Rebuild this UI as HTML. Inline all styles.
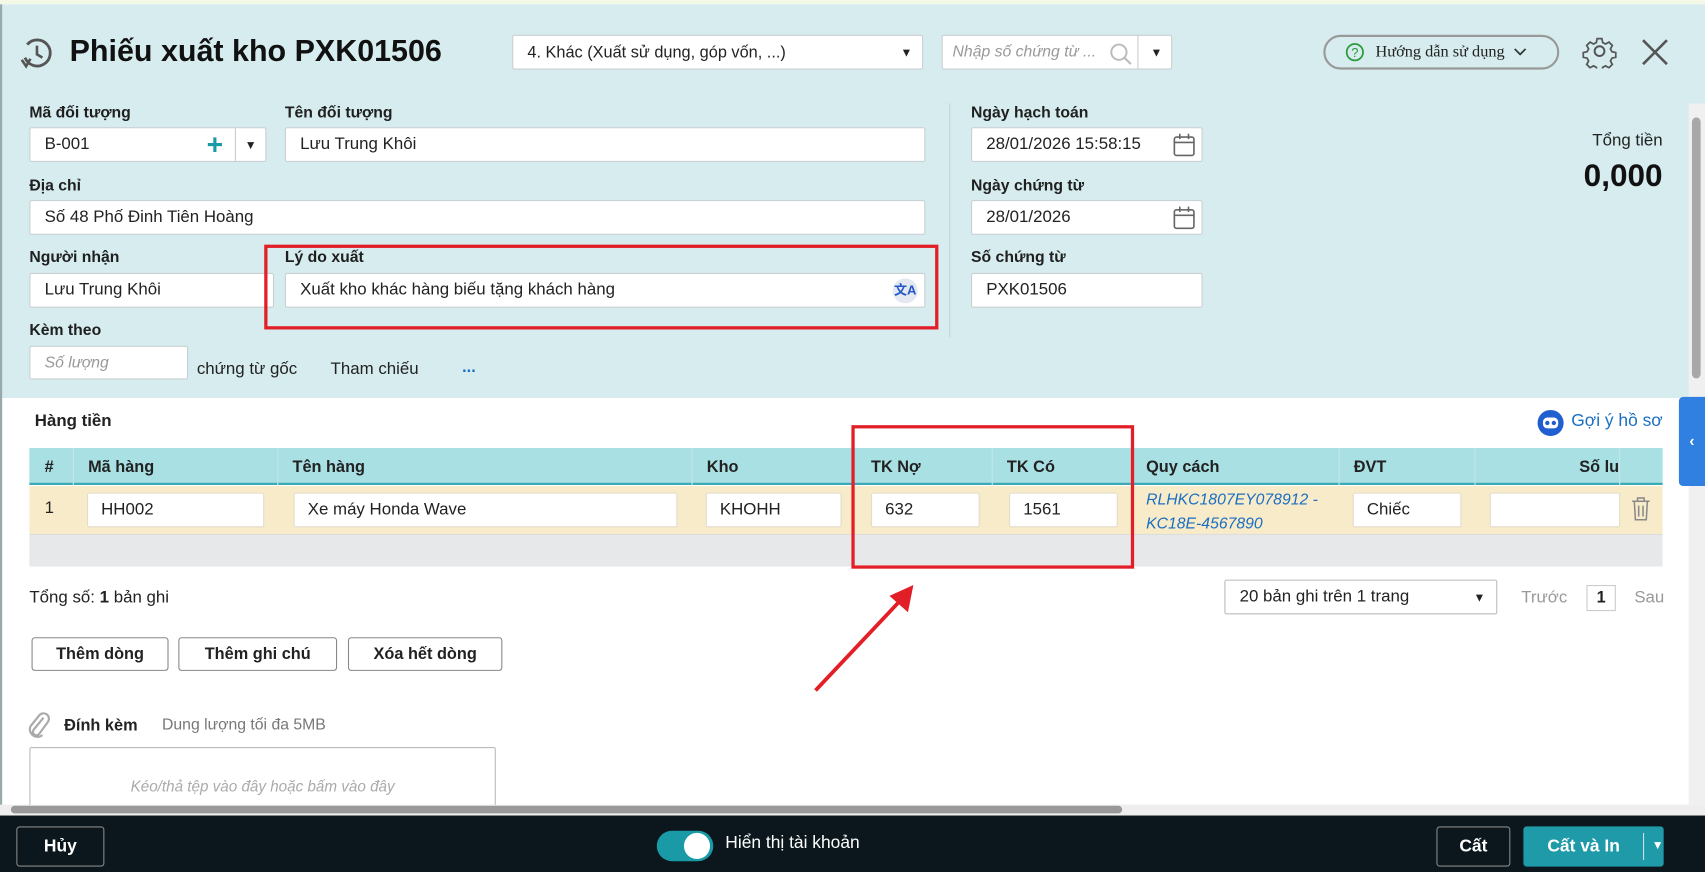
<!DOCTYPE html>
<html><head><meta charset="utf-8">
<style>
*{box-sizing:border-box;margin:0;padding:0}
html,body{width:1705px;height:872px;overflow:hidden;background:#fff}
body{font-family:"Liberation Sans","Noto Sans CJK SC",sans-serif;color:#222;font-size:15px}
#w{position:absolute;left:0;top:0;width:1568px;height:802px;transform:scale(1.08737);transform-origin:0 0;overflow:hidden;background:#fff}
.a{position:absolute}
.lbl{position:absolute;font-weight:bold;font-size:14.5px;color:#1f1f1f}
.in{position:absolute;background:#fff;border:1px solid #c9cfd2;border-radius:2px;font-size:15.5px;padding-left:13px;display:flex;align-items:center;color:#222}
.th{position:absolute;top:412px;height:34px;display:flex;align-items:center;font-weight:bold;font-size:15px;padding-left:13px;border-right:1px solid #c4e6e8}
.ti{position:absolute;top:453px;height:32px;background:#fff;border:1px solid #e2dcc8;border-radius:2px;font-size:15.5px;padding-left:12px;display:flex;align-items:center}
.btn{position:absolute;top:586px;height:31px;border:1px solid #888;border-radius:3px;background:#fff;font-weight:bold;font-size:15px;display:flex;align-items:center;justify-content:center}
.arr{position:absolute;top:10px;font-size:11px}
</style></head><body><div id="w">
<div class="a" style="left:0;top:0;width:1568px;height:4px;background:#f4f8e6"></div>
<div class="a" style="left:0;top:4px;width:1568px;height:362px;background:#d6ecee"></div>
<div class="a" style="left:0;top:4px;width:2px;height:746px;background:#9aa"></div>

<svg class="a" style="left:19px;top:33px" width="30" height="32" viewBox="0 0 30 32"><path d="M6 8 A12 12 0 1 1 4 20" fill="none" stroke="#555" stroke-width="2.6"/><path d="M15 9 V17 L20 20" fill="none" stroke="#555" stroke-width="2.4"/><path d="M1 22 L5 28 L9 21" fill="none" stroke="#555" stroke-width="2.4"/></svg>
<div class="a" style="left:64px;top:31px;font-size:28px;font-weight:bold;color:#111">Phiếu xuất kho PXK01506</div>

<div class="in" style="left:471px;top:32px;width:378px;height:32px;font-size:15px">4. Khác (Xuất sử dụng, góp vốn, ...)<span class="arr" style="right:9px">▼</span></div>
<div class="in" style="left:866px;top:32px;width:212px;height:32px;font-size:14.5px;color:#999;font-style:italic;padding-left:9px">Nhập số chứng từ ...
<svg class="a" style="left:153px;top:6px" width="22" height="22"><circle cx="9" cy="9" r="7" fill="none" stroke="#bbb" stroke-width="1.8"/><path d="M14 14 L20 20" stroke="#bbb" stroke-width="2"/></svg>
<div class="a" style="left:179px;top:0;width:1px;height:30px;background:#ccc"></div><span class="arr" style="right:8px;color:#222;font-style:normal">▼</span></div>

<div class="a" style="left:1217px;top:32px;width:217px;height:32px;border:2px solid #999;border-radius:16px;display:flex;align-items:center;padding-left:18px;font-family:'Liberation Serif',serif;font-size:15px;color:#222"><svg width="18" height="18" style="margin-right:10px"><circle cx="9" cy="9" r="7.5" fill="none" stroke="#2a9a3a" stroke-width="1.6"/><text x="9" y="13.5" text-anchor="middle" font-size="12" fill="#2a9a3a" font-family="Liberation Sans">?</text></svg>Hướng dẫn sử dụng<svg width="14" height="10" style="margin-left:7px"><path d="M2 2 L7 7 L12 2" fill="none" stroke="#333" stroke-width="1.6"/></svg></div>
<svg class="a" style="left:1455px;top:31px" width="32" height="32" viewBox="0 0 32 32"><path d="M13.5 3h5l.8 4 3 1.6 3.6-2 3.5 3.5-2 3.6 1.6 3h0l4 .8v5l-4 .8-1.6 3 2 3.6-3.5 3.5-3.6-2-3 1.6-.8 4h-5l-.8-4-3-1.6-3.6 2-3.5-3.5 2-3.6-1.6-3-4-.8v-5l4-.8 1.6-3-2-3.6 3.5-3.5 3.6 2 3-1.6z" fill="none" stroke="#555" stroke-width="1.8" transform="translate(16 16) scale(.88) translate(-16 -16)"/><circle cx="16" cy="16" r="4.5" fill="none" stroke="#555" stroke-width="1.8"/></svg>
<svg class="a" style="left:1509px;top:35px" width="26" height="26"><path d="M2 2 L24 24 M24 2 L2 24" stroke="#555" stroke-width="2.4"/></svg>

<div class="lbl" style="left:27px;top:96px">Mã đối tượng</div>
<div class="in" style="left:27px;top:117px;width:218px;height:32px">B-001
<span class="a" style="left:162px;top:0px;font-size:26px;color:#1a9aa6;line-height:30px;font-weight:bold">+</span>
<div class="a" style="left:188px;top:0;width:1px;height:30px;background:#ccc"></div><span class="arr" style="right:8px">▼</span></div>
<div class="lbl" style="left:262px;top:96px">Tên đối tượng</div>
<div class="in" style="left:262px;top:117px;width:589px;height:32px">Lưu Trung Khôi</div>
<div class="lbl" style="left:27px;top:163px">Địa chỉ</div>
<div class="in" style="left:27px;top:184px;width:824px;height:32px">Số 48 Phố Đinh Tiên Hoàng</div>
<div class="lbl" style="left:27px;top:229px">Người nhận</div>
<div class="in" style="left:27px;top:251px;width:225px;height:32px">Lưu Trung Khôi</div>
<div class="lbl" style="left:262px;top:229px">Lý do xuất</div>
<div class="in" style="left:262px;top:251px;width:589px;height:32px">Xuất kho khác hàng biếu tặng khách hàng
<div class="a" style="right:6px;top:4px;width:23px;height:23px;border-radius:50%;background:#e4e8f0;color:#2456c8;font-weight:bold;font-size:12px;text-align:center;line-height:23px">文A</div></div>
<div class="a" style="left:243px;top:225px;width:620px;height:78px;border:3px solid #e21f26"></div>
<div class="lbl" style="left:27px;top:296px">Kèm theo</div>
<div class="in" style="left:27px;top:318px;width:146px;height:31px;color:#999;font-style:italic;font-size:14.5px">Số lượng</div>
<div class="a" style="left:181px;top:331px;font-size:15.5px">chứng từ gốc</div>
<div class="a" style="left:304px;top:331px;font-size:15.5px">Tham chiếu</div>
<div class="a" style="left:425px;top:329px;font-size:15px;color:#1a6fc4;font-weight:bold">...</div>

<div class="a" style="left:873px;top:95px;width:1px;height:215px;background:#c0d4d6"></div>
<div class="lbl" style="left:893px;top:96px">Ngày hạch toán</div>
<div class="in" style="left:893px;top:117px;width:213px;height:32px">28/01/2026 15:58:15</div>
<div class="lbl" style="left:893px;top:163px">Ngày chứng từ</div>
<div class="in" style="left:893px;top:184px;width:213px;height:32px">28/01/2026</div>
<svg class="a" style="left:1078px;top:121px" width="22" height="24"><rect x="2" y="5" width="18" height="17" rx="2" fill="none" stroke="#666" stroke-width="1.5"/><path d="M2 10H20M7 2V7M15 2V7" stroke="#666" stroke-width="1.5"/></svg>
<svg class="a" style="left:1078px;top:188px" width="22" height="24"><rect x="2" y="5" width="18" height="17" rx="2" fill="none" stroke="#666" stroke-width="1.5"/><path d="M2 10H20M7 2V7M15 2V7" stroke="#666" stroke-width="1.5"/></svg>
<div class="lbl" style="left:893px;top:229px">Số chứng từ</div>
<div class="in" style="left:893px;top:251px;width:213px;height:32px">PXK01506</div>
<div class="a" style="right:39px;top:121px;font-size:15.5px">Tổng tiền</div>
<div class="a" style="right:39px;top:146px;font-size:29px;font-weight:bold;color:#111">0,000</div>

<div class="a" style="left:1553px;top:95px;width:15px;height:645px;background:#f0f0f0"></div>
<div class="a" style="left:1556px;top:108px;width:8px;height:240px;background:#a8a8a8;border-radius:4px"></div>
<div class="a" style="left:1544px;top:365px;width:24px;height:82px;background:#2f80e0;border-radius:4px 0 0 4px;color:#fff;font-weight:bold;text-align:center;line-height:80px;font-size:14px">‹</div>

<div class="a" style="left:32px;top:379px;font-weight:bold;font-size:15.5px">Hàng tiền</div>
<svg class="a" style="left:1413px;top:376px" width="26" height="26"><circle cx="13" cy="13" r="12" fill="#1f5fd0"/><rect x="6" y="8" width="14" height="10" rx="4" fill="#fff"/><circle cx="10" cy="13" r="2" fill="#1f5fd0"/><circle cx="16" cy="13" r="2" fill="#1f5fd0"/></svg>
<div class="a" style="left:1445px;top:379px;font-size:16px;color:#1a6fc4">Gợi ý hồ sơ</div>

<div class="a" style="left:27px;top:412px;width:1502px;height:34px;background:#a9e0e4;border-bottom:2px solid #3aa9b3"></div>
<div class="th" style="left:27px;width:41px;padding-left:14px">#</div>
<div class="th" style="left:68px;width:188px">Mã hàng</div>
<div class="th" style="left:256px;width:381px">Tên hàng</div>
<div class="th" style="left:637px;width:148px">Kho</div>
<div class="th" style="left:785px;width:128px;padding-left:16px">TK Nợ</div>
<div class="th" style="left:913px;width:128px">TK Có</div>
<div class="th" style="left:1041px;width:191px">Quy cách</div>
<div class="th" style="left:1232px;width:125px">ĐVT</div>
<div class="th" style="left:1357px;width:133px;justify-content:flex-end;padding-right:0">Số lu</div>
<div class="a" style="left:27px;top:447px;width:1502px;height:45px;background:#f8ebc9;border-bottom:1px solid #ddd"></div>
<div class="a" style="left:41px;top:459px;font-size:15.5px">1</div>
<div class="ti" style="left:80px;width:163px">HH002</div>
<div class="ti" style="left:270px;width:353px">Xe máy Honda Wave</div>
<div class="ti" style="left:649px;width:125px">KHOHH</div>
<div class="ti" style="left:801px;width:100px">632</div>
<div class="ti" style="left:928px;width:100px">1561</div>
<div class="a" style="left:1054px;top:449px;font-size:14.5px;font-style:italic;color:#1a6fc4;line-height:22px">RLHKC1807EY078912 -<br>KC18E-4567890</div>
<div class="ti" style="left:1244px;width:100px">Chiếc</div>
<div class="ti" style="left:1370px;width:120px"></div>
<svg class="a" style="left:1499px;top:456px" width="20" height="24"><path d="M2 5H18M7 5V2H13V5M4 5L5 22H15L16 5M8 9V19M12 9V19" fill="none" stroke="#888" stroke-width="1.4"/></svg>
<div class="a" style="left:27px;top:492px;width:1502px;height:29px;background:#e7e8ea"></div>
<div class="a" style="left:783px;top:391px;width:260px;height:132px;border:3px solid #e21f26"></div>
<svg class="a" style="left:740px;top:530px" width="110" height="115"><path d="M10 105 L92 18" stroke="#e21f26" stroke-width="3.5"/><path d="M100 8 L78 18 L95 33 Z" fill="#e21f26"/></svg>

<div class="a" style="left:27px;top:541px;font-size:15.5px">Tổng số: <b>1</b> bản ghi</div>
<div class="in" style="left:1126px;top:533px;width:251px;height:32px;font-size:15.5px;border-color:#bbb">20 bản ghi trên 1 trang<span class="arr" style="right:10px">▼</span></div>
<div class="a" style="left:1399px;top:541px;color:#999;font-size:15.5px">Trước</div>
<div class="a" style="left:1459px;top:538px;width:27px;height:24px;border:1px solid #ccc;font-weight:bold;text-align:center;line-height:22px">1</div>
<div class="a" style="left:1503px;top:541px;color:#999;font-size:15.5px">Sau</div>

<div class="btn" style="left:29px;width:126px">Thêm dòng</div>
<div class="btn" style="left:164px;width:146px">Thêm ghi chú</div>
<div class="btn" style="left:320px;width:142px">Xóa hết dòng</div>

<svg class="a" style="left:25px;top:655px" width="22" height="26"><path d="M15 5 L6 16 a3 3 0 0 0 5 4 L19 9 a5 5 0 0 0-8-6 L3 13 a7 7 0 0 0 11 8" fill="none" stroke="#aaa" stroke-width="2"/></svg>
<div class="a" style="left:59px;top:659px;font-weight:bold;font-size:15px">Đính kèm</div>
<div class="a" style="left:149px;top:659px;font-size:14.5px;color:#777">Dung lượng tối đa 5MB</div>
<div class="a" style="left:27px;top:687px;width:429px;height:60px;border:1px solid #bbb;border-radius:2px"></div>
<div class="a" style="left:27px;top:715px;width:429px;text-align:center;font-size:14px;color:#aaa;font-style:italic">Kéo/thả tệp vào đây hoặc bấm vào đây</div>

<div class="a" style="left:0;top:740px;width:1568px;height:10px;background:#eee"></div>
<div class="a" style="left:10px;top:741px;width:1022px;height:7px;background:#999;border-radius:4px"></div>

<div class="a" style="left:0;top:750px;width:1568px;height:52px;background:#0b171c"></div>
<div class="a" style="left:15px;top:760px;width:81px;height:37px;border:1px solid #888;border-radius:3px;color:#fff;font-weight:bold;font-size:16px;text-align:center;line-height:35px">Hủy</div>
<div class="a" style="left:604px;top:764px;width:52px;height:28px;background:#1a9aa6;border-radius:14px"></div>
<div class="a" style="left:629px;top:766px;width:24px;height:24px;background:#fff;border-radius:50%"></div>
<div class="a" style="left:667px;top:767px;color:#fff;font-size:16px">Hiển thị tài khoản</div>
<div class="a" style="left:1321px;top:760px;width:68px;height:37px;border:1px solid #888;border-radius:3px;background:#0b171c;color:#fff;font-weight:bold;font-size:16px;text-align:center;line-height:35px">Cất</div>
<div class="a" style="left:1401px;top:760px;width:129px;height:37px;background:#1e9aa8;border-radius:3px;color:#fff;font-weight:bold;font-size:16px;line-height:37px;padding-left:22px">Cất và In</div>
<div class="a" style="left:1511px;top:766px;width:1px;height:25px;background:#cde"></div>
<div class="a" style="left:1519px;top:772px;color:#fff;font-size:11px">▼</div>
</div></body></html>
